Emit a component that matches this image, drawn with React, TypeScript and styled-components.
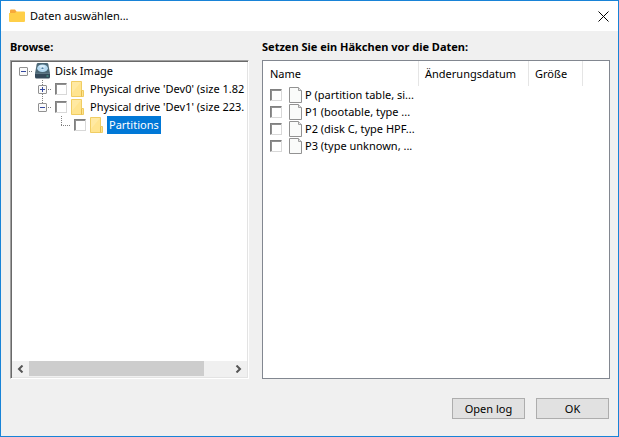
import React from 'react';
import styled, { createGlobalStyle, css } from 'styled-components';

const GlobalStyle = createGlobalStyle`
  *, *::before, *::after { box-sizing: border-box; }
  body {
    margin: 0;
    font-family: "Noto Sans", "Open Sans", sans-serif;
    font-size: 11px;
    line-height: 16px;
    color: #000;
  }
  button, input { font: inherit; color: inherit; margin: 0; }
  svg { display: block; flex: none; }
`;

const Dialog = styled.div`
  display: flex;
  flex-direction: column;
  min-height: 100vh;
  border: 1px solid #1883d7;
  background: #f0f0f0;
`;

const TitleBar = styled.header`
  display: flex;
  align-items: center;
  gap: 5px;
  height: 30px;
  padding: 0 9px 0 8px;
  background: #fff;
`;

const Title = styled.h1`
  flex: 1;
  margin: 0;
  font-size: 11px;
  font-weight: 400;
`;

const CloseButton = styled.button`
  padding: 0;
  border: 0;
  background: none;
`;

const Content = styled.main`
  flex: 1;
  display: grid;
  grid-template-columns: minmax(0, 239fr) minmax(0, 348fr);
  column-gap: 13px;
  padding: 8px 8px 0 9px;
`;

const Section = styled.section`
  display: flex;
  flex-direction: column;
  gap: 5px;
`;

const SectionTitle = styled.h2`
  margin: 0;
  font-size: 11px;
  line-height: 16px;
  font-weight: 700;
  white-space: nowrap;
`;

const TreePanel = styled.div`
  flex: 1;
  display: flex;
  flex-direction: column;
  justify-content: space-between;
  overflow: hidden;
  background: #fff;
  border: 1px solid;
  border-color: #a0a0a0 #fff #fff #a0a0a0;
  box-shadow: inset 1px 1px #696969, inset -1px -1px #e3e3e3;
  padding: 1px;
`;

const Tree = styled.ul`
  list-style: none;
  margin: 0;
  padding: 0 2px;
  overflow: hidden;
`;

const TreeRow = styled.li<{ $level: number }>`
  display: flex;
  align-items: center;
  height: 18px;
  padding-left: ${(p) => p.$level * 19}px;
  white-space: nowrap;
`;

const Twisty = styled.button`
  padding: 0;
  border: 0;
  background: none;
  flex: none;
`;

const ItemLabel = styled.label<{ $root?: boolean }>`
  display: flex;
  align-items: center;
  gap: ${(p) => (p.$root ? 3 : 4)}px;
  padding-left: ${(p) => (p.$root ? 2 : 3)}px;
`;

const ItemText = styled.span<{ $selected?: boolean }>`
  height: 18px;
  line-height: 18px;
  padding: 0 2px;
  ${(p) =>
    p.$selected &&
    css`
      background: #0078d7;
      color: #fff;
    `}
`;

const CheckBox = styled.input.attrs({ type: 'checkbox' })`
  appearance: none;
  flex: none;
  width: 12px;
  height: 12px;
  background: #fff;
  border: 1px solid;
  border-color: #808080 #d8d8d8 #d8d8d8 #808080;
  box-shadow: inset 1px 1px #909090;
  &:checked { background: #0078d7; }
`;

const ScrollBar = styled.div`
  display: grid;
  grid-template-columns: 17px 1fr 17px;
  height: 16px;
  background: #f0f0f0;
`;

const ScrollButton = styled.button`
  display: grid;
  place-items: center;
  padding: 0;
  border: 0;
  background: none;
`;

const ScrollThumb = styled.div`
  width: 87%;
  height: 15px;
  background: #cdcdcd;
`;

const ListPanel = styled.div`
  flex: 1;
  overflow: hidden;
  background: #fff;
  border: 1px solid #828790;
`;

const FileTable = styled.table`
  width: 100%;
  table-layout: fixed;
  border-collapse: separate;
  border-spacing: 0;
`;

const HeaderCell = styled.th<{ $width?: number }>`
  width: ${(p) => (p.$width ? `${p.$width}px` : 'auto')};
  height: 25px;
  padding: 0 0 0 6px;
  text-align: left;
  font-weight: 400;
  border-right: ${(p) => (p.$width ? '1px solid #e5e5e5' : '0')};
  &:first-child { padding-left: 7px; }
`;

const FileCell = styled.td`
  height: 17px;
  padding: 0 0 0 7px;
`;

const FileLabel = styled.label`
  display: flex;
  align-items: center;
  height: 17px;
  white-space: nowrap;
`;

const FileIcon = styled.span`
  margin: 0 3px 0 7px;
`;

const Footer = styled.footer`
  display: flex;
  justify-content: flex-end;
  gap: 11px;
  padding: 19px 9px 17px;
`;

const PushButton = styled.button`
  width: 73px;
  height: 21px;
  padding: 0;
  border: 1px solid #adadad;
  background: #e1e1e1;
  line-height: 16px;
`;

const TitleFolderIcon = () => (
  <svg width="16" height="14" viewBox="0 0 16 14" aria-hidden="true">
    <path d="M1 1.500Q1 .5 2 .5h4l1.500 2V5H1z" fill="#f7a93b" />
    <path d="M1 4h5l1.500-1.500H15q1 0 1 1V12q0 1-1 1H1q-1 0-1-1V4z" fill="#ffcf48" />
  </svg>
);

const CloseIcon = () => (
  <svg width="11" height="11" viewBox="0 0 11 11" aria-hidden="true">
    <path d="M.5.5l10 10M10.5.5l-10 10" stroke="#000" fill="none" />
  </svg>
);

const FolderIcon = () => (
  <svg width="13" height="16" viewBox="0 0 13 16" aria-hidden="true">
    <path d="M.5.5h10v9h2v6H.5z" fill="#ffe48f" stroke="#f0cd63" />
    <path d="M1 1h9L1 12z" fill="#ffedaf" opacity=".6" />
    <path d="M10.5 9.5v6" stroke="#e6bd4c" />
  </svg>
);

const DiskIcon = () => (
  <svg width="15" height="16" viewBox="0 0 15 16" aria-hidden="true">
    <path d="M3 0h9q1 0 1.300 1L15 10.500H0L1.700 1Q2 0 3 0z" fill="#4c6877" />
    <path d="M0 10.500h15V14q0 1.500-1.500 1.500h-12Q0 15.500 0 14z" fill="#34495a" />
    <path d="M0 10.500h15" stroke="#5d7786" />
    <ellipse cx="7.500" cy="5.200" rx="5.300" ry="3.800" fill="#b5daf2" />
    <path d="M3.700 3.200q3-2.400 7 0L7.500 5.200z" fill="#d6edfb" />
    <ellipse cx="7.500" cy="5.200" rx="1.800" ry="1.300" fill="#4b7fa6" stroke="#e8f6ff" />
    <path d="M11.500 13h2" stroke="#4fb39a" />
  </svg>
);

const PageIcon = () => (
  <svg width="13" height="16" viewBox="0 0 13 16" aria-hidden="true">
    <path d="M.5.5h9l3 3v12H.5z" fill="#fafbfa" stroke="#929292" />
    <path d="M9.500.5v3h3" fill="#e4e4e4" stroke="#a0a0a0" />
  </svg>
);

type Branch = 'root' | 'collapsed' | 'expanded' | 'leaf';

const BranchGlyph = ({ kind }: { kind: Branch }) => (
  <svg width="19" height="18" viewBox="0 0 19 18" aria-hidden="true">
    <g stroke="#808080" strokeDasharray="1 1" fill="none">
      {kind !== 'root' && <path d="M9.500 0v9" />}
      {kind === 'collapsed' && <path d="M9.500 14v4" />}
      <path d={kind === 'leaf' ? 'M9 9.500h10' : 'M15 9.500h4'} />
    </g>
    {kind !== 'leaf' && (
      <>
        <rect x="5.500" y="5.500" width="8" height="8" rx=".5" fill="#fafafa" stroke="#919191" />
        <path
          d={kind === 'collapsed' ? 'M7 9.500h5M9.500 7v5' : 'M7 9.500h5'}
          stroke="#3549a0"
          fill="none"
        />
      </>
    )}
  </svg>
);

const Chevron = ({ right }: { right?: boolean }) => (
  <svg width="7" height="8" viewBox="0 0 7 8" aria-hidden="true">
    <path
      d={right ? 'M1.500 .5L5 4 1.500 7.500' : 'M5.500 .5L2 4l3.500 3.500'}
      stroke="#555"
      strokeWidth="2"
      fill="none"
    />
  </svg>
);

const nodes: { text: string; level: number; kind: Branch; selected?: boolean }[] = [
  { text: 'Disk Image', level: 0, kind: 'root' },
  { text: "Physical drive 'Dev0' (size 1.82", level: 1, kind: 'collapsed' },
  { text: "Physical drive 'Dev1' (size 223.", level: 1, kind: 'expanded' },
  { text: 'Partitions', level: 2, kind: 'leaf', selected: true },
];

const files = [
  'P (partition table, si...',
  'P1 (bootable, type ...',
  'P2 (disk C, type HPF...',
  'P3 (type unknown, ...',
];

export default function App() {
  return (
    <>
      <GlobalStyle />
      <Dialog role="dialog" aria-labelledby="dialog-title">
        <TitleBar>
          <TitleFolderIcon />
          <Title id="dialog-title">Daten auswählen...</Title>
          <CloseButton aria-label="Schließen">
            <CloseIcon />
          </CloseButton>
        </TitleBar>
        <Content>
          <Section>
            <SectionTitle>Browse:</SectionTitle>
            <TreePanel>
              <Tree>
                {nodes.map((node) => (
                  <TreeRow key={node.text} $level={node.level}>
                    {node.kind === 'leaf' ? (
                      <BranchGlyph kind={node.kind} />
                    ) : (
                      <Twisty aria-label={node.text} aria-expanded={node.kind !== 'collapsed'}>
                        <BranchGlyph kind={node.kind} />
                      </Twisty>
                    )}
                    <ItemLabel $root={node.level === 0}>
                      {node.level > 0 && <CheckBox />}
                      {node.level > 0 ? <FolderIcon /> : <DiskIcon />}
                      <ItemText $selected={node.selected}>{node.text}</ItemText>
                    </ItemLabel>
                  </TreeRow>
                ))}
              </Tree>
              <ScrollBar>
                <ScrollButton aria-label="Nach links">
                  <Chevron />
                </ScrollButton>
                <ScrollThumb />
                <ScrollButton aria-label="Nach rechts">
                  <Chevron right />
                </ScrollButton>
              </ScrollBar>
            </TreePanel>
          </Section>
          <Section>
            <SectionTitle>Setzen Sie ein Häkchen vor die Daten:</SectionTitle>
            <ListPanel>
              <FileTable>
                <thead>
                  <tr>
                    <HeaderCell $width={156}>Name</HeaderCell>
                    <HeaderCell $width={110}>Änderungsdatum</HeaderCell>
                    <HeaderCell $width={54}>Größe</HeaderCell>
                    <HeaderCell />
                  </tr>
                </thead>
                <tbody>
                  {files.map((file) => (
                    <tr key={file}>
                      <FileCell>
                        <FileLabel>
                          <CheckBox />
                          <FileIcon>
                            <PageIcon />
                          </FileIcon>
                          {file}
                        </FileLabel>
                      </FileCell>
                      <FileCell />
                      <FileCell />
                      <FileCell />
                    </tr>
                  ))}
                </tbody>
              </FileTable>
            </ListPanel>
          </Section>
        </Content>
        <Footer>
          <PushButton>Open log</PushButton>
          <PushButton>OK</PushButton>
        </Footer>
      </Dialog>
    </>
  );
}
